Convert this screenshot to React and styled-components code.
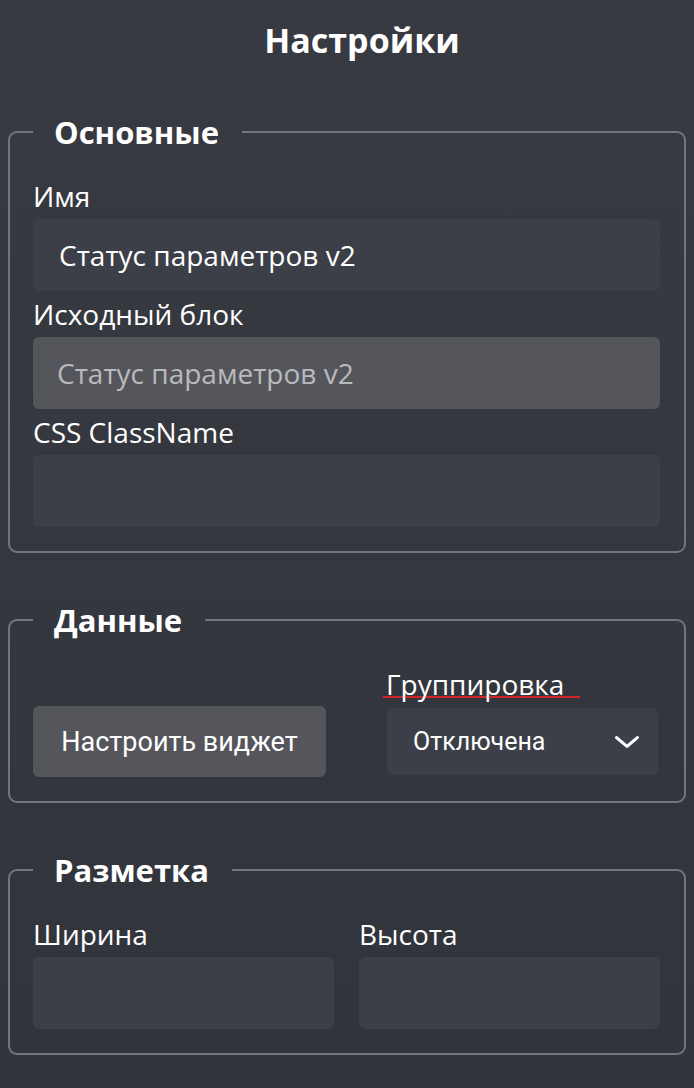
import React from "react";
import styled, { createGlobalStyle } from "styled-components";

const GlobalStyle = createGlobalStyle`
  html, body {
    margin: 0;
    padding: 0;
    background: #33353c;
  }
  body {
    font-family: "Open Sans", "Noto Sans", sans-serif;
    color: #ffffff;
  }
  * { box-sizing: border-box; }
`;

const Page = styled.div`
  min-height: 1088px;
  padding: 8px 8px 0 8px;
  background: linear-gradient(180deg, #383a42 0%, #32343b 100%);
`;

const Title = styled.h1`
  margin: 0;
  padding: 8px 0 0 30px;
  height: 103px;
  text-align: center;
  font-size: 34px;
  line-height: 48px;
  font-weight: 700;
`;

const Section = styled.fieldset`
  margin: 0 0 ${(p) => p.$gap || 0}px 0;
  padding: 0 24px 24px 23px;
  border: 2px solid #74757b;
  border-radius: 9px;
  min-width: 0;
`;

const Legend = styled.legend`
  margin: 0;
  padding: 0 23px 0 21px;
  font-size: 31px;
  line-height: 42px;
  font-weight: 700;
`;

const Body = styled.div`
  display: flex;
  flex-direction: column;
  gap: 6px;
  padding-top: 26px;
`;

const Field = styled.label`
  display: flex;
  flex-direction: column;
`;

const Caption = styled.span`
  display: block;
  font-size: 28px;
  line-height: 34px;
  height: 34px;
  margin-bottom: ${(p) => p.$space ?? 6}px;
  white-space: nowrap;
`;

/* word flagged by the spell checker */
const Spelled = styled.span`
  display: inline-block;
  margin-left: -3px;
  padding: 0 16px 0 3px;
  line-height: 24px;
  border-bottom: 2px solid #d1262a;
`;

const Input = styled.input`
  height: 72px;
  width: 100%;
  border: none;
  outline: none;
  border-radius: 6px;
  padding: 0 26px;
  font-family: "Open Sans", "Noto Sans", sans-serif;
  font-size: 28px;
  color: #ffffff;
  background: ${(p) => (p.disabled ? "#55565c" : "#3d3f48")};
  &:disabled {
    color: #b9babe;
    padding-left: 24px;
  }
`;

const DataRow = styled.div`
  display: grid;
  grid-template-columns: 293px 1fr;
  column-gap: 60px;
  align-items: end;
  padding-top: 26px;
`;

const Button = styled.button`
  height: 71px;
  border: none;
  border-radius: 6px;
  background: #55565c;
  color: #ffffff;
  font-family: Roboto, "Liberation Sans", sans-serif;
  font-size: 27px;
  cursor: pointer;
`;

const SelectBox = styled.div`
  height: 67px;
  margin: 0 2px 2px 1px;
  border-radius: 6px;
  background: #3d3f48;
  display: flex;
  align-items: center;
  justify-content: space-between;
  padding: 0 19px 0 26px;
  font-family: Roboto, "Liberation Sans", sans-serif;
  font-size: 25px;
`;

const SizeRow = styled.div`
  display: grid;
  grid-template-columns: 1fr 1fr;
  column-gap: 25px;
  padding-top: 26px;
`;

const Chevron = () => (
  <svg width="24" height="12" viewBox="0 0 24 12" fill="none" overflow="visible">
    <path
      d="M1.6 1.6 L12 10.4 L22.4 1.6"
      stroke="#ffffff"
      strokeWidth="3.2"
      strokeLinecap="round"
      strokeLinejoin="round"
    />
  </svg>
);

export default function App() {
  return (
    <>
      <GlobalStyle />
      <Page>
        <Title>Настройки</Title>

        <Section $gap={46}>
          <Legend>Основные</Legend>
          <Body>
            <Field>
              <Caption>Имя</Caption>
              <Input defaultValue="Статус параметров v2" />
            </Field>
            <Field>
              <Caption>Исходный блок</Caption>
              <Input disabled defaultValue="Статус параметров v2" />
            </Field>
            <Field>
              <Caption>CSS ClassName</Caption>
              <Input defaultValue="" />
            </Field>
          </Body>
        </Section>

        <Section $gap={46}>
          <Legend>Данные</Legend>
          <DataRow>
            <Button>Настроить виджет</Button>
            <Field>
              <Caption $space={7}>
                <Spelled>Группировка</Spelled>
              </Caption>
              <SelectBox>
                <span>Отключена</span>
                <Chevron />
              </SelectBox>
            </Field>
          </DataRow>
        </Section>

        <Section>
          <Legend>Разметка</Legend>
          <SizeRow>
            <Field>
              <Caption>Ширина</Caption>
              <Input defaultValue="" />
            </Field>
            <Field>
              <Caption>Высота</Caption>
              <Input defaultValue="" />
            </Field>
          </SizeRow>
        </Section>
      </Page>
    </>
  );
}
